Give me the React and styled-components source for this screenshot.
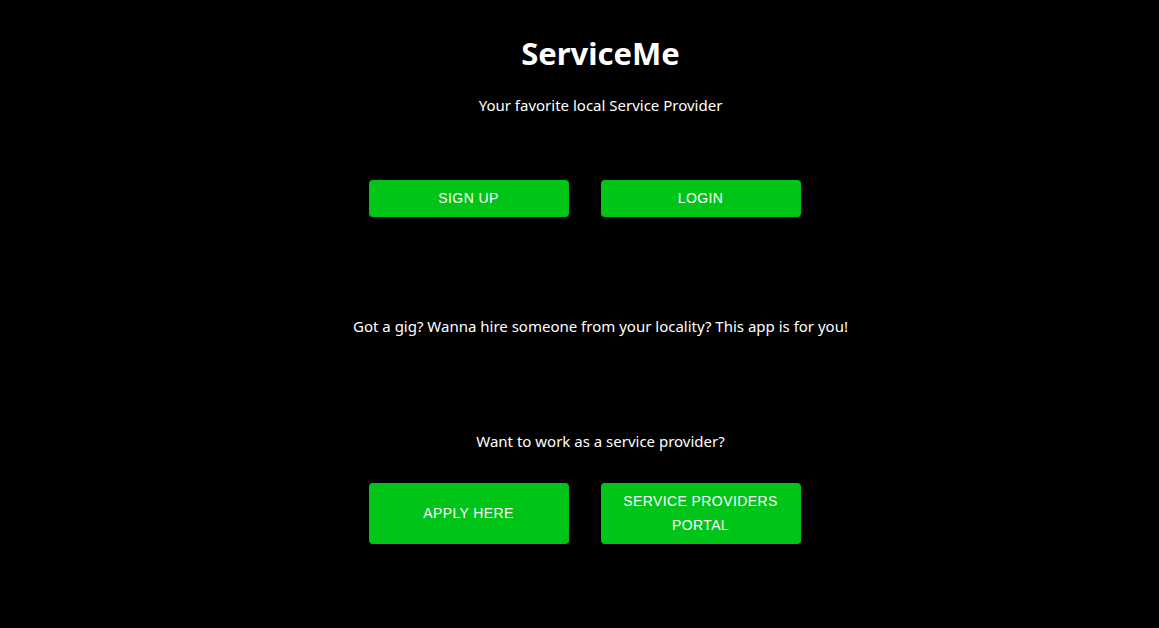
import React from "react";
import styled, { createGlobalStyle } from "styled-components";

const GlobalStyle = createGlobalStyle`
  html, body {
    margin: 0;
    padding: 0;
    background: #000;
  }
  body {
    font-family: "Noto Sans", "Open Sans", sans-serif;
    color: #fff;
  }
`;

const Page = styled.div`
  min-height: 628px;
  background: #000;
  padding-left: 42px;
  display: flex;
  flex-direction: column;
  align-items: center;
  text-align: center;
`;

const Title = styled.h1`
  margin: 34px 0 0;
  font-size: 31px;
  line-height: 38px;
  font-weight: 700;
`;

const Text = styled.p`
  margin: ${(p) => p.$top}px 0 0;
  font-size: 15px;
  line-height: 22px;
`;

const ButtonRow = styled.div`
  display: flex;
  gap: 32px;
  padding-right: 32px;
  margin-top: ${(p) => p.$top}px;
`;

const Button = styled.button`
  width: 200px;
  min-height: 36px;
  padding: 6px 16px;
  border: none;
  border-radius: 4px;
  background: #00c417;
  color: #fff;
  font-family: "Liberation Sans", Arial, sans-serif;
  font-size: 14px;
  line-height: 24.5px;
  letter-spacing: 0.4px;
  text-transform: uppercase;
  cursor: pointer;
`;

export default function App() {
  return (
    <>
      <GlobalStyle />
      <Page>
        <Title>ServiceMe</Title>
        <Text $top={22}>Your favorite local Service Provider</Text>
        <ButtonRow $top={64}>
          <Button>Sign up</Button>
          <Button>Login</Button>
        </ButtonRow>
        <Text $top={98}>
          Got a gig? Wanna hire someone from your locality? This app is for you!
        </Text>
        <Text $top={93}>Want to work as a service provider?</Text>
        <ButtonRow $top={31}>
          <Button>Apply here</Button>
          <Button>Service providers portal</Button>
        </ButtonRow>
      </Page>
    </>
  );
}
